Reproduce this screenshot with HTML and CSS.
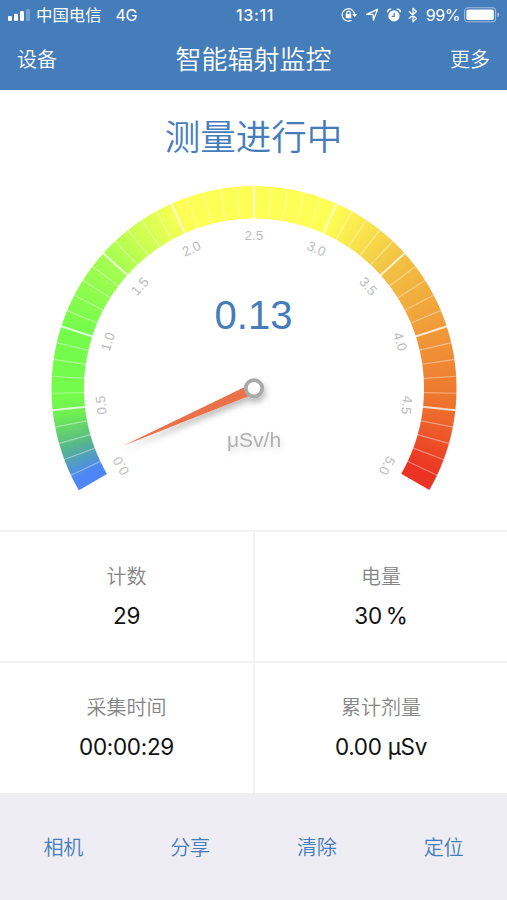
FILE: index.html
```html
<!DOCTYPE html>
<html lang="zh-CN">
<head>
<meta charset="utf-8">
<title>智能辐射监控</title>
<link rel="stylesheet" href="styles.css">
</head>
<body>
<div class="screen">
  <header class="header">
    <div class="status">
      <div class="status-left">
        <svg class="signal" width="23" height="12" viewBox="0 0 23 12" fill="#fff"><rect x="0" y="7" width="4" height="5" rx="1.2"/><rect x="6" y="4.7" width="4" height="7.3" rx="1.2"/><rect x="12" y="2" width="4" height="10" rx="1.2"/><rect x="18" y="0" width="4" height="12" rx="1.2" opacity=".28"/></svg>
        <span class="carrier">中国电信</span>
        <span class="network">4G</span>
      </div>
      <div class="clock">13:11</div>
      <div class="status-right">
        <svg class="lock" width="17" height="16" viewBox="0 0 17 16" fill="none" stroke="#fff" stroke-width="1.25"><path d="M10.5 13.3A6.2 6.2 0 1 1 13.6 8"/><path d="M11.2 7h4.9l-2.4 3.2z" fill="#fff" stroke="none"/><rect x="4.7" y="7" width="5.6" height="4.3" rx=".6" fill="#fff" stroke="none"/><path d="M5.8 7.3V5.8a1.7 1.7 0 0 1 3.4 0v1.5"/></svg>
        <svg class="arrow" width="14" height="14" viewBox="0 0 14 14" fill="none" stroke="#fff" stroke-width="1.3" stroke-linejoin="round"><path d="M12.6 1.3 8.4 12.2 8 6.3 1.6 6.4z"/></svg>
        <svg class="alarm" width="14" height="15" viewBox="0 0 14 15"><path d="M.9 4.3A2.4 2.4 0 0 1 4.2 1.4M9.8 1.4a2.4 2.4 0 0 1 3.3 2.9" fill="none" stroke="#fff" stroke-width="1.5"/><circle cx="7" cy="7.9" r="5.6" fill="#fff"/><path d="M7.2 4.7v3.6H4.6" fill="none" stroke="#457cba" stroke-width="1.2"/></svg>
        <svg class="bluetooth" width="10" height="16" viewBox="0 0 10 16" fill="none" stroke="#fff" stroke-width="1.3" stroke-linejoin="round"><path d="m1 4.3 7.4 7.2L5 14.7V1.3l3.4 3.2L1 11.7"/></svg>
        <span class="percent">99%</span>
        <svg class="battery" width="36" height="16" viewBox="0 0 36 16"><rect x=".6" y=".8" width="31" height="14" rx="3.4" fill="none" stroke="#fff" stroke-opacity=".5" stroke-width="1.1"/><rect x="2.4" y="2.6" width="27.4" height="10.4" rx="1.8" fill="#fff"/><path d="M33.3 5.5q2 .6 2 2.3t-2 2.3z" fill="#fff" opacity=".5"/></svg>
      </div>
    </div>
    <nav class="nav">
      <a class="nav-link">设备</a>
      <h1 class="title">智能辐射监控</h1>
      <a class="nav-link">更多</a>
    </nav>
  </header>

  <main class="monitor">
    <h2 class="state">测量进行中</h2>
    <div class="gauge">
      <div class="band"></div>
      <svg class="dial" width="406" height="330" viewBox="-203 -203 406 330">
        <defs>
          <filter id="shadow" filterUnits="userSpaceOnUse" x="-160" y="-40" width="220" height="130"><feDropShadow dx="1.5" dy="4" stdDeviation="3" flood-color="#000" flood-opacity=".28"/></filter>
        </defs>
        <g id="ticks"></g>
        <g id="labels" class="labels"></g>
        <text class="reading" x="-.5" y="-60.5">0.13</text>
        <text class="unit" x="0" y="58">μSv/h</text>
        <g filter="url(#shadow)" transform="translate(0 -.7)">
          <path transform="rotate(-23.76)" d="M-5-5-143.5 0-5 5z" fill="#ea7148"/>
          <circle r="8.2" fill="#fff" stroke="#a9a9a9" stroke-width="3.8"/>
        </g>
      </svg>
    </div>
  </main>

  <section class="stats">
    <div class="stat"><span class="name">计数</span><span class="value">29</span></div>
    <div class="stat"><span class="name">电量</span><span class="value percent-value">30 %</span></div>
    <div class="stat"><span class="name">采集时间</span><span class="value">00:00:29</span></div>
    <div class="stat"><span class="name">累计剂量</span><span class="value">0.00 μSv</span></div>
  </section>

  <footer class="tools"><a>相机</a><a>分享</a><a>清除</a><a>定位</a></footer>
</div>
<script src="gauge.js"></script>
</body>
</html>
```
FILE: gauge.js
```js
const NS = "http://www.w3.org/2000/svg";
const ticks = document.getElementById("ticks");
const labels = document.getElementById("labels");

// 50 divisions over 240 degrees, a label on every fifth one
for (let i = 0; i <= 50; i++) {
  const rotation = `rotate(${(-120 + i * 4.8).toFixed(1)})`;
  const major = i % 5 === 0;
  if (i > 0 && i < 50) {
    const line = document.createElementNS(NS, "line");
    line.setAttribute("y1", -203);
    line.setAttribute("y2", -169);
    line.setAttribute("class", major ? "major" : "minor");
    line.setAttribute("transform", rotation);
    ticks.append(line);
  }
  if (major) {
    const text = document.createElementNS(NS, "text");
    text.setAttribute("y", -149);
    text.setAttribute("transform", rotation);
    text.textContent = (i / 10).toFixed(1);
    labels.append(text);
  }
}
```
FILE: styles.css
```css
* { box-sizing: border-box; }
body {
  margin: 0;
  background: #fff;
  font-family: Inter, "Noto Sans CJK SC", sans-serif;
}
.screen {
  width: 507px;
  height: 900px;
  display: flex;
  flex-direction: column;
  overflow: hidden;
}
svg { display: block; flex: none; }

.header {
  height: 90px;
  background: #457cba;
  color: #fff;
}
.status {
  height: 30px;
  display: grid;
  grid-template-columns: 1fr auto 1fr;
  align-items: center;
  padding: 0 7px 0 8px;
  font-size: 16px;
  line-height: 30px;
}
.status-left, .status-right { display: flex; align-items: center; }
.status-right { justify-content: flex-end; }
.carrier { margin-left: 5px; font-size: 16.4px; }
.network { margin-left: 14px; letter-spacing: -.3px; }
.clock { margin-left: 2px; font-weight: 550; letter-spacing: .6px; }
.arrow { margin-left: 7px; }
.alarm { margin-left: 8px; }
.bluetooth { margin-left: 7px; }
.percent { margin-left: 8px; font-size: 16px; letter-spacing: -.4px; }
.battery { margin-left: 4px; }

.nav {
  height: 60px;
  display: flex;
  justify-content: space-between;
  align-items: center;
  padding: 0 17px;
}
.nav-link { font-size: 20px; font-weight: 350; line-height: 30px; }
.title { margin: 0; font-size: 26px; line-height: 38px; font-weight: 350; }

.monitor {
  height: 440px;
  display: flex;
  flex-direction: column;
  align-items: center;
}
.state {
  margin: 22px 0 0;
  height: 74px;
  color: #457cba;
  font-size: 35.5px;
  font-weight: 350;
  line-height: 51px;
}
.gauge { display: grid; width: 406px; height: 330px; margin-left: 1px; }
.gauge > * { grid-area: 1 / 1; }
.band {
  width: 406px;
  height: 330px;
  background: conic-gradient(from -120deg at 203px 202.6px,
    #4e86f7 0deg, #4e86f7 3deg, #55b48e 12deg, #6fee52 22deg, #74fb4c 27deg,
    #74fb4c 48deg, #a6fd50 72deg, #feff54 98deg, #feff54 144deg,
    #f2c244 168deg, #f09a38 192deg, #ed702d 216deg, #ea3323 236deg,
    #ea3323 239.9deg, transparent 240.2deg, transparent 359.7deg, #4e86f7 360deg);
  -webkit-mask: radial-gradient(circle at 203px 202.6px, transparent 169.5px, #000 170.5px, #000 202px, transparent 203px);
  mask: radial-gradient(circle at 203px 202.6px, transparent 169.5px, #000 170.5px, #000 202px, transparent 203px);
}
.dial {
  z-index: 1;
  overflow: visible;
  font-family: "Liberation Sans", Arial, sans-serif;
  text-anchor: middle;
}
.major { stroke: #fff; stroke-opacity: .75; stroke-width: 2; }
.minor { stroke: #fff; stroke-opacity: .38; stroke-width: 1.2; }
.labels { fill: #bcbcbc; font-size: 13.5px; }
.reading { fill: #457cba; font-size: 40px; }
.unit { fill: #b0b0b0; font-size: 21px; filter: drop-shadow(1px 3px 3px rgb(0 0 0 / .15)); }

.stats {
  height: 263px;
  display: grid;
  grid-template-columns: 255px 252px;
  grid-template-rows: 131px 132px;
}
.stat {
  display: flex;
  flex-direction: column;
  align-items: center;
  padding-top: 30px;
  border-top: 2px solid #f3f3f4;
}
.stat:nth-child(odd) { border-right: 2px solid #f3f3f4; }
.name { height: 38px; color: #858585; font-size: 20px; font-weight: 350; line-height: 30px; }
.value { color: #111; font-size: 22.5px; line-height: 32px; letter-spacing: -.3px; }
.percent-value { word-spacing: -2px; }

.tools {
  height: 107px;
  display: grid;
  grid-template-columns: repeat(4, 1fr);
  align-items: center;
  background: #eeedf3;
  color: #457cba;
  font-size: 20px;
  font-weight: 350;
  text-align: center;
}
```
